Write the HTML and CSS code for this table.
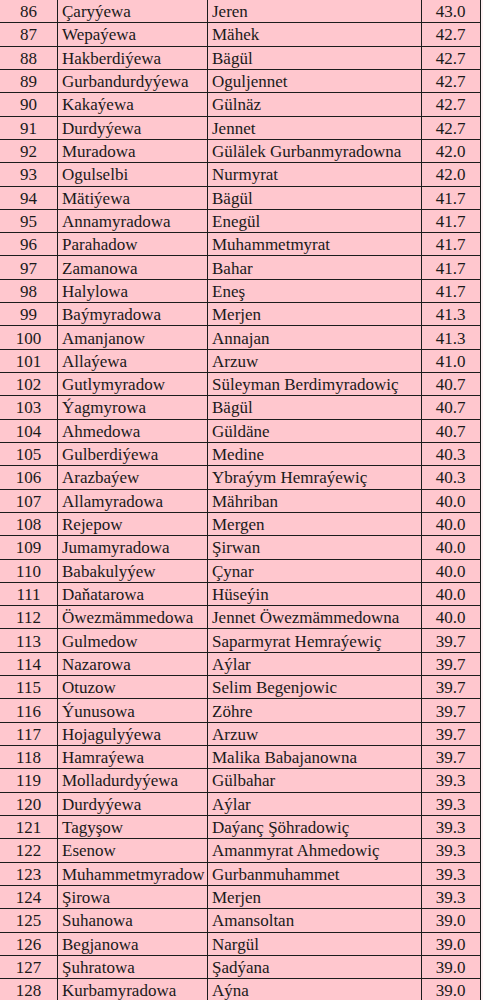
FILE: index.html
```html
<!DOCTYPE html>
<html lang="tk">
<head>
<meta charset="utf-8">
<title>Sanaw</title>
<link rel="stylesheet" href="styles.css">
</head>
<body>
<div class="sheet">
  <div class="row"><div class="c num">86</div><div class="c">Çaryýewa</div><div class="c">Jeren</div><div class="c score">43.0</div></div>
  <div class="row"><div class="c num">87</div><div class="c">Wepaýewa</div><div class="c">Mähek</div><div class="c score">42.7</div></div>
  <div class="row"><div class="c num">88</div><div class="c">Hakberdiýewa</div><div class="c">Bägül</div><div class="c score">42.7</div></div>
  <div class="row"><div class="c num">89</div><div class="c">Gurbandurdyýewa</div><div class="c">Oguljennet</div><div class="c score">42.7</div></div>
  <div class="row"><div class="c num">90</div><div class="c">Kakaýewa</div><div class="c">Gülnäz</div><div class="c score">42.7</div></div>
  <div class="row"><div class="c num">91</div><div class="c">Durdyýewa</div><div class="c">Jennet</div><div class="c score">42.7</div></div>
  <div class="row"><div class="c num">92</div><div class="c">Muradowa</div><div class="c">Gülälek Gurbanmyradowna</div><div class="c score">42.0</div></div>
  <div class="row"><div class="c num">93</div><div class="c">Ogulselbi</div><div class="c">Nurmyrat</div><div class="c score">42.0</div></div>
  <div class="row"><div class="c num">94</div><div class="c">Mätiýewa</div><div class="c">Bägül</div><div class="c score">41.7</div></div>
  <div class="row"><div class="c num">95</div><div class="c">Annamyradowa</div><div class="c">Enegül</div><div class="c score">41.7</div></div>
  <div class="row"><div class="c num">96</div><div class="c">Parahadow</div><div class="c">Muhammetmyrat</div><div class="c score">41.7</div></div>
  <div class="row"><div class="c num">97</div><div class="c">Zamanowa</div><div class="c">Bahar</div><div class="c score">41.7</div></div>
  <div class="row"><div class="c num">98</div><div class="c">Halylowa</div><div class="c">Eneş</div><div class="c score">41.7</div></div>
  <div class="row"><div class="c num">99</div><div class="c">Baýmyradowa</div><div class="c">Merjen</div><div class="c score">41.3</div></div>
  <div class="row"><div class="c num">100</div><div class="c">Amanjanow</div><div class="c">Annajan</div><div class="c score">41.3</div></div>
  <div class="row"><div class="c num">101</div><div class="c">Allaýewa</div><div class="c">Arzuw</div><div class="c score">41.0</div></div>
  <div class="row"><div class="c num">102</div><div class="c">Gutlymyradow</div><div class="c">Süleyman Berdimyradowiç</div><div class="c score">40.7</div></div>
  <div class="row"><div class="c num">103</div><div class="c">Ýagmyrowa</div><div class="c">Bägül</div><div class="c score">40.7</div></div>
  <div class="row"><div class="c num">104</div><div class="c">Ahmedowa</div><div class="c">Güldäne</div><div class="c score">40.7</div></div>
  <div class="row"><div class="c num">105</div><div class="c">Gulberdiýewa</div><div class="c">Medine</div><div class="c score">40.3</div></div>
  <div class="row"><div class="c num">106</div><div class="c">Arazbaýew</div><div class="c">Ybraýym Hemraýewiç</div><div class="c score">40.3</div></div>
  <div class="row"><div class="c num">107</div><div class="c">Allamyradowa</div><div class="c">Mähriban</div><div class="c score">40.0</div></div>
  <div class="row"><div class="c num">108</div><div class="c">Rejepow</div><div class="c">Mergen</div><div class="c score">40.0</div></div>
  <div class="row"><div class="c num">109</div><div class="c">Jumamyradowa</div><div class="c">Şirwan</div><div class="c score">40.0</div></div>
  <div class="row"><div class="c num">110</div><div class="c">Babakulyýew</div><div class="c">Çynar</div><div class="c score">40.0</div></div>
  <div class="row"><div class="c num">111</div><div class="c">Daňatarowa</div><div class="c">Hüseýin</div><div class="c score">40.0</div></div>
  <div class="row"><div class="c num">112</div><div class="c">Öwezmämmedowa</div><div class="c">Jennet Öwezmämmedowna</div><div class="c score">40.0</div></div>
  <div class="row"><div class="c num">113</div><div class="c">Gulmedow</div><div class="c">Saparmyrat Hemraýewiç</div><div class="c score">39.7</div></div>
  <div class="row"><div class="c num">114</div><div class="c">Nazarowa</div><div class="c">Aýlar</div><div class="c score">39.7</div></div>
  <div class="row"><div class="c num">115</div><div class="c">Otuzow</div><div class="c">Selim Begenjowic</div><div class="c score">39.7</div></div>
  <div class="row"><div class="c num">116</div><div class="c">Ýunusowa</div><div class="c">Zöhre</div><div class="c score">39.7</div></div>
  <div class="row"><div class="c num">117</div><div class="c">Hojagulyýewa</div><div class="c">Arzuw</div><div class="c score">39.7</div></div>
  <div class="row"><div class="c num">118</div><div class="c">Hamraýewa</div><div class="c">Malika Babajanowna</div><div class="c score">39.7</div></div>
  <div class="row"><div class="c num">119</div><div class="c">Molladurdyýewa</div><div class="c">Gülbahar</div><div class="c score">39.3</div></div>
  <div class="row"><div class="c num">120</div><div class="c">Durdyýewa</div><div class="c">Aýlar</div><div class="c score">39.3</div></div>
  <div class="row"><div class="c num">121</div><div class="c">Tagyşow</div><div class="c">Daýanç Şöhradowiç</div><div class="c score">39.3</div></div>
  <div class="row"><div class="c num">122</div><div class="c">Esenow</div><div class="c">Amanmyrat Ahmedowiç</div><div class="c score">39.3</div></div>
  <div class="row"><div class="c num">123</div><div class="c">Muhammetmyradow</div><div class="c">Gurbanmuhammet</div><div class="c score">39.3</div></div>
  <div class="row"><div class="c num">124</div><div class="c">Şirowa</div><div class="c">Merjen</div><div class="c score">39.3</div></div>
  <div class="row"><div class="c num">125</div><div class="c">Suhanowa</div><div class="c">Amansoltan</div><div class="c score">39.0</div></div>
  <div class="row"><div class="c num">126</div><div class="c">Begjanowa</div><div class="c">Nargül</div><div class="c score">39.0</div></div>
  <div class="row"><div class="c num">127</div><div class="c">Şuhratowa</div><div class="c">Şadýana</div><div class="c score">39.0</div></div>
  <div class="row"><div class="c num">128</div><div class="c">Kurbamyradowa</div><div class="c">Aýna</div><div class="c score">39.0</div></div>
</div>
</body>
</html>
```

FILE: styles.css
```css
html, body {
  margin: 0;
  padding: 0;
  background: #fff2f4;
  overflow: hidden;
}

.sheet {
  width: 480.5px;
  margin-top: -1px;
  border-top: 1px solid #1c1c1c;
  background: #ffc7ce;
  font-family: "Liberation Serif", "Times New Roman", serif;
  font-size: 17px;
  color: #1a1a1a;
}

.row {
  display: grid;
  grid-template-columns: 58px 150px 213.5px 59px;
  height: 23.32px;
  box-sizing: border-box;
  border-bottom: 1px solid #1c1c1c;
}

.c {
  display: flex;
  align-items: center;
  padding: 1px 0 0 4px;
  border-right: 1px solid #1c1c1c;
  white-space: nowrap;
  overflow: hidden;
  line-height: 1;
}

.num,
.score {
  justify-content: center;
  padding-left: 0;
}
```
